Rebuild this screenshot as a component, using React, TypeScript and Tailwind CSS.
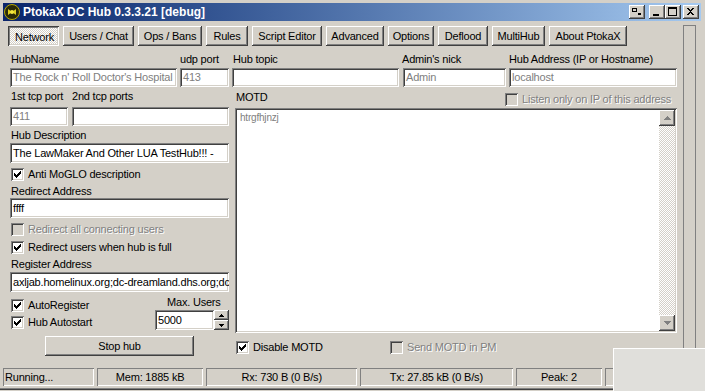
import React from "react";

const raised =
  "bg-[#d4d0c8] shadow-[inset_-1px_-1px_#404040,inset_1px_1px_#ffffff,inset_-2px_-2px_#808080,inset_2px_2px_#d4d0c8]";
const pressed =
  "bg-[image:repeating-conic-gradient(#ffffff_0%_25%,#d4d0c8_0%_50%)] bg-[length:2px_2px] shadow-[inset_1px_1px_#404040,inset_-1px_-1px_#ffffff,inset_2px_2px_#808080,inset_-2px_-2px_#d4d0c8]";
const sunken =
  "shadow-[inset_1px_1px_#808080,inset_-1px_-1px_#ffffff,inset_2px_2px_#404040,inset_-2px_-2px_#d4d0c8]";
const greyed = "text-[#808080] [text-shadow:1px_1px_0_#ffffff]";

function Logo() {
  return (
    <svg width="16" height="16" viewBox="0 0 16 16" className="ml-[1px] shrink-0">
      <circle cx="8" cy="8" r="7.5" fill="#2a2a08" stroke="#b8a800" />
      <path d="M4 5l4 3-4 3zM12 5l-4 3 4 3z" fill="#e0d020" />
      <circle cx="8" cy="8" r="2" fill="#f4e840" />
    </svg>
  );
}

function CapBtn({ kind, className = "" }: { kind: string; className?: string }) {
  return (
    <div className={`h-[14px] w-[16px] ${raised} ${className}`}>
      <svg width="16" height="14" viewBox="0 0 16 14" shapeRendering="crispEdges">
        {kind === "tray" && (
          <>
            <path d="M3 3h5v1H3zM3 6h5v1H3zM3 3h1v4H3zM7 3h1v4H7z" fill="#000" />
            <rect x="9" y="8" width="3" height="2" fill="#000" />
          </>
        )}
        {kind === "min" && <rect x="4" y="9" width="6" height="2" fill="#000" />}
        {kind === "max" && (
          <path d="M3 2h9v2H3zM3 2h1v9H3zM11 2h1v9h-1zM3 10h9v1H3z" fill="#000" />
        )}
        {kind === "close" && (
          <path
            d="M4 3h2v1h1v1h1V4h1V3h2v1h-1v1H9v1H8v1h1v1h1v1h1v1H9V9H8V8H7v1H6v1H4V9h1V8h1V7h1V6H6V5H5V4H4z"
            fill="#000"
          />
        )}
      </svg>
    </div>
  );
}

function Tab({ label, className, active }: { label: string; className: string; active?: boolean }) {
  return (
    <div
      className={`flex h-[20px] items-center justify-center whitespace-nowrap ${className} ${
        active ? `${pressed} pl-[2px] pt-[2px]` : raised
      }`}
    >
      {label}
    </div>
  );
}

function Check({ on, disabled }: { on?: boolean; disabled?: boolean }) {
  return (
    <span
      className={`relative block h-[13px] w-[13px] shrink-0 ${sunken} ${
        disabled ? "bg-[#d4d0c8]" : "bg-white"
      }`}
    >
      {on && (
        <svg width="13" height="13" viewBox="0 0 13 13" className="absolute inset-0" shapeRendering="crispEdges">
          <path
            d="M3 5h1v3H3zM4 6h1v3H4zM5 7h1v3H5zM6 6h1v3H6zM7 5h1v3H7zM8 4h1v3H8zM9 3h1v3H9z"
            fill="#000"
          />
        </svg>
      )}
    </span>
  );
}

function CheckRow({
  label,
  on,
  disabled,
  className = "",
}: {
  label: string;
  on?: boolean;
  disabled?: boolean;
  className?: string;
}) {
  return (
    <div className={`flex h-[13px] items-center ${className}`}>
      <Check on={on} disabled={disabled} />
      <span className={`ml-[4px] whitespace-nowrap leading-[13px] ${disabled ? greyed : ""}`}>{label}</span>
    </div>
  );
}

function TextBox({ value, className, muted }: { value: string; className: string; muted?: boolean }) {
  return (
    <div
      className={`flex items-center overflow-hidden whitespace-nowrap bg-white pl-[3px] pr-[2px] ${sunken} ${
        muted ? "text-[#808080]" : ""
      } ${className}`}
    >
      {value}
    </div>
  );
}

function Arrow({ up, color }: { up?: boolean; color: string }) {
  return (
    <svg width="7" height="4" viewBox="0 0 7 4" shapeRendering="crispEdges">
      {up ? (
        <path d="M3 0h1v1h1v1h1v1h1v1H0V3h1V2h1V1h1z" fill={color} />
      ) : (
        <path d="M0 0h7v1H6v1H5v1H4v1H3V3H2V2H1V1H0z" fill={color} />
      )}
    </svg>
  );
}

function Panel({ children, className }: { children?: React.ReactNode; className: string }) {
  return (
    <div
      className={`flex h-[18px] items-center whitespace-nowrap shadow-[inset_1px_1px_#808080,inset_-1px_-1px_#ffffff] ${className}`}
    >
      {children}
    </div>
  );
}

export default function App() {
  return (
    <div className="relative h-[391px] w-[705px] overflow-hidden bg-[#d4d0c8] font-['Liberation_Sans',Arial,sans-serif] text-[11px] leading-[13px] tracking-[-0.2px] text-black">
      {/* title bar */}
      <div className="ml-[3px] mt-[3px] flex h-[18px] w-[698px] items-center bg-linear-to-r from-[#0a246a] to-[#a6caf0] pr-[2px]">
        <Logo />
        <span className="ml-[3px] whitespace-nowrap text-[12px] font-bold tracking-normal text-white">
          PtokaX DC Hub 0.3.3.21 [debug]
        </span>
        <div className="ml-auto flex">
          <CapBtn kind="tray" />
          <CapBtn kind="min" className="ml-[4px]" />
          <CapBtn kind="max" />
          <CapBtn kind="close" className="ml-[2px]" />
        </div>
      </div>

      <div className="mt-[4px] flex h-[343px]">
        <div className="w-[683px]">
          {/* tabs */}
          <div className="ml-[8px] mt-[1px] flex gap-[4px]">
            <Tab label="Network" className="w-[51px]" active />
            <Tab label="Users / Chat" className="w-[71px]" />
            <Tab label="Ops / Bans" className="w-[64px]" />
            <Tab label="Rules" className="w-[42px]" />
            <Tab label="Script Editor" className="w-[70px]" />
            <Tab label="Advanced" className="w-[58px]" />
            <Tab label="Options" className="w-[46px]" />
            <Tab label="Deflood" className="w-[50px]" />
            <Tab label="MultiHub" className="w-[53px]" />
            <Tab label="About PtokaX" className="w-[78px]" />
          </div>

          <div className="ml-[10px] mt-[7px] flex">
            {/* left column */}
            <div className="flex w-[219px] flex-col">
              <div className="flex gap-[3px]">
                <div className="w-[167px]">
                  <div className="h-[13px] pl-[1px]">HubName</div>
                  <TextBox className="mt-[2px] h-[19px]" muted value="The Rock n' Roll Doctor's Hospital" />
                </div>
                <div className="w-[49px]">
                  <div className="h-[13px]">udp port</div>
                  <TextBox className="mt-[2px] h-[19px]" muted value="413" />
                </div>
              </div>
              <div className="mt-[3px] flex gap-[4px]">
                <div className="w-[58px]">
                  <div className="h-[13px] pl-[1px]">1st tcp port</div>
                  <TextBox className="mt-[4px] h-[19px]" muted value="411" />
                </div>
                <div className="flex-1">
                  <div className="h-[13px]">2nd tcp ports</div>
                  <TextBox className="mt-[4px] h-[19px]" value="" />
                </div>
              </div>
              <div className="mt-[3px] h-[13px] pl-[1px]">Hub Description</div>
              <TextBox className="mt-[1px] h-[20px]" value="The LawMaker And Other LUA TestHub!!! - " />
              <CheckRow className="ml-[1px] mt-[5px]" on label="Anti MoGLO description" />
              <div className="mt-[4px] h-[13px] pl-[1px]">Redirect Address</div>
              <TextBox className="h-[20px]" value="ffff" />
              <CheckRow className="ml-[1px] mt-[5px]" disabled label="Redirect all connecting users" />
              <CheckRow className="ml-[1px] mt-[5px]" on label="Redirect users when hub is full" />
              <div className="mt-[4px] h-[13px] pl-[1px]">Register Address</div>
              <TextBox className="mt-[1px] h-[20px]" value="axljab.homelinux.org;dc-dreamland.dhs.org;dc" />
              <div className="mt-[4px] flex">
                <div className="flex flex-col pt-[3px]">
                  <CheckRow className="ml-[1px]" on label="AutoRegister" />
                  <CheckRow className="ml-[1px] mt-[4px]" on label="Hub Autostart" />
                </div>
                <div className="ml-auto flex w-[74px] flex-col">
                  <div className="h-[13px] pl-[12px]">Max. Users</div>
                  <div className="mt-[1px] flex">
                    <TextBox className="h-[20px] w-[59px]" value="5000" />
                    <div className="flex flex-col">
                      <div className={`flex h-[10px] w-[15px] items-center justify-center ${raised}`}>
                        <svg width="5" height="3" viewBox="0 0 5 3" shapeRendering="crispEdges">
                          <path d="M2 0h1v1h1v1h1v1H0V2h1V1h1z" fill="#000" />
                        </svg>
                      </div>
                      <div className={`flex h-[10px] w-[15px] items-center justify-center ${raised}`}>
                        <svg width="5" height="3" viewBox="0 0 5 3" shapeRendering="crispEdges">
                          <path d="M0 0h5v1H4v1H3v1H2V2H1V1H0z" fill="#000" />
                        </svg>
                      </div>
                    </div>
                  </div>
                </div>
              </div>
              <div className={`ml-[35px] mt-[6px] flex h-[20px] w-[149px] items-center justify-center ${raised}`}>
                Stop hub
              </div>
            </div>

            {/* right column */}
            <div className="ml-[3px] flex w-[445px] flex-col">
              <div className="flex">
                <div className="w-[167px]">
                  <div className="h-[13px] pl-[1px]">Hub topic</div>
                  <TextBox className="mt-[2px] h-[19px]" value="" />
                </div>
                <div className="ml-[4px] w-[103px]">
                  <div className="-ml-[1px] h-[13px]">Admin's nick</div>
                  <TextBox className="mt-[2px] h-[19px]" muted value="Admin" />
                </div>
                <div className="ml-[3px] w-[168px]">
                  <div className="h-[13px]">Hub Address (IP or Hostname)</div>
                  <TextBox className="mt-[2px] h-[19px]" muted value="localhost" />
                </div>
              </div>
              <div className="mt-[3px] flex h-[16px]">
                <span className="ml-[4px] w-[269px] pt-[1px]">MOTD</span>
                <CheckRow className="mt-[3px]" disabled label="Listen only on IP of this address" />
              </div>
              <div className={`ml-[3px] mt-[2px] flex h-[225px] w-[442px] bg-white p-[2px] ${sunken}`}>
                <div className="flex-1 pl-[3px] pt-[2px] text-[10px] leading-[12px] text-[#808080]">htrgfhjnzj</div>
                <div className="flex w-[16px] flex-col">
                  <div className={`flex h-[16px] items-center justify-center ${raised}`}>
                    <Arrow up color="#808080" />
                  </div>
                  <div className="flex-1 bg-[image:repeating-conic-gradient(#ffffff_0%_25%,#d4d0c8_0%_50%)] bg-[length:2px_2px]" />
                  <div className={`flex h-[16px] items-center justify-center ${raised}`}>
                    <Arrow color="#808080" />
                  </div>
                </div>
              </div>
              <div className="ml-[4px] mt-[8px] flex">
                <div className="w-[154px]">
                  <CheckRow on label="Disable MOTD" />
                </div>
                <CheckRow disabled label="Send MOTD in PM" />
              </div>
            </div>
          </div>
        </div>
        <div className="h-[340px] w-[12px] border-l border-t border-[#808080] border-r-white shadow-[1px_0_#808080]" />
      </div>

      {/* status bar */}
      <div className="ml-[3px] flex gap-[3px]">
        <Panel className="w-[91px] pl-[2px]">Running...</Panel>
        <Panel className="w-[107px] justify-center">Mem: 1885 kB</Panel>
        <Panel className="w-[151px] justify-center">Rx: 730 B (0 B/s)</Panel>
        <Panel className="w-[153px] justify-center">Tx: 27.85 kB (0 B/s)</Panel>
        <Panel className="w-[87px] justify-center">Peak: 2</Panel>
        <Panel className="w-[100px]" />
      </div>
      <div className="mt-[2px] h-[1px] bg-[#808080]" />
      <div className="h-[1px] bg-[#404040]" />

      {/* overlapping window corner */}
      <div className="absolute left-[613px] top-[348px] h-[43px] w-[92px] border-l border-t border-white bg-[#e0dfdb]" />
    </div>
  );
}
